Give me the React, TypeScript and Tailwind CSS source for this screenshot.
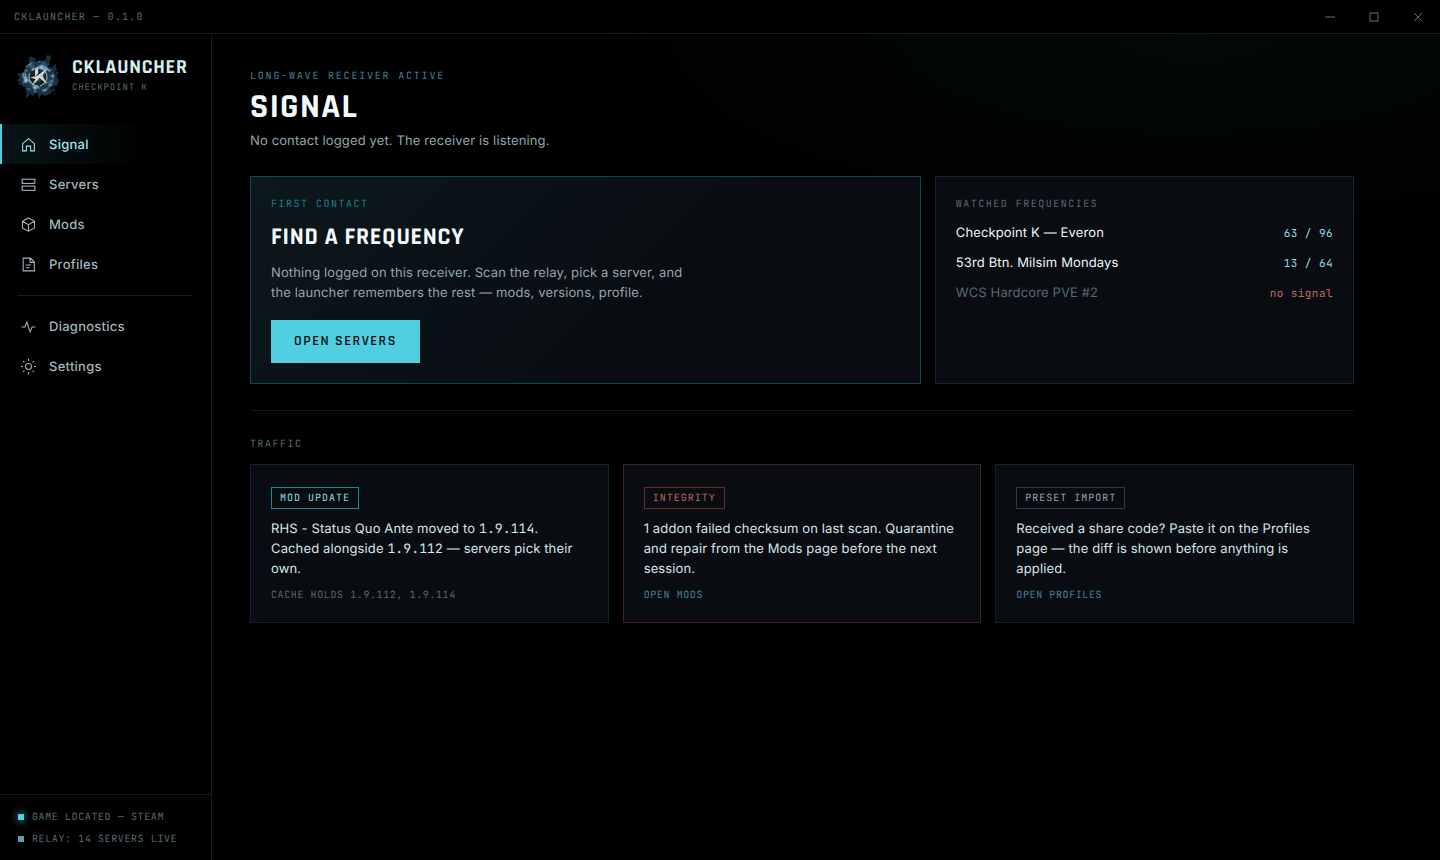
import { ReactNode } from "react";
import { clsx } from "clsx";

const MONO = "font-['JetBrains_Mono','DejaVu_Sans_Mono',monospace]";
const DISPLAY = "font-['Rajdhani','Liberation_Sans_Narrow','Roboto',sans-serif]";

const ICONS: Record<string, ReactNode> = {
  signal: <path d="M2.5 7.2 8 2.5l5.500 4.700V14h-3.500V9.500H6V14H2.500z" />,
  servers: (
    <>
      <rect x="2" y="3" width="12" height="4" />
      <rect x="2" y="9.500" width="12" height="4" />
    </>
  ),
  mods: <path d="M8 1.800 13.700 5v6.200L8 14.300l-5.700-3.100V5zM2.300 5 8 8.200 13.700 5M8 8.200v6.100" />,
  profiles: <path d="M3 2h6.800L13.500 5.700V14H3zM9.500 2v4h4M5.500 8.500h5M5.500 11h3.500" />,
  diagnostics: <path d="M1.500 8.500h3L6.500 4l3 9 2-4.500h3" />,
  settings: (
    <>
      <circle cx="8" cy="8" r="2.800" />
      <path d="M8 .8v2M8 13.200v2M.8 8h2M13.200 8h2M2.900 2.900l1.300 1.300M11.800 11.800l1.300 1.300M2.900 13.100l1.300-1.300M11.800 4.200l1.300-1.300" />
    </>
  ),
};

const PRIMARY = [
  { id: "signal", label: "Signal" },
  { id: "servers", label: "Servers" },
  { id: "mods", label: "Mods" },
  { id: "profiles", label: "Profiles" },
];

const SECONDARY = [
  { id: "diagnostics", label: "Diagnostics" },
  { id: "settings", label: "Settings" },
];

const WATCHED = [
  { name: "Checkpoint K — Everon", count: "63 / 96" },
  { name: "53rd Btn. Milsim Mondays", count: "13 / 64" },
  { name: "WCS Hardcore PVE #2", count: null },
];

function Logo() {
  return (
    <svg viewBox="0 0 44 44" className="h-11 w-11 flex-shrink-0" aria-hidden="true">
      <defs>
        <filter id="ragged" x="-20%" y="-20%" width="140%" height="140%">
          <feTurbulence type="fractalNoise" baseFrequency="0.16" numOctaves="3" seed="7" result="n" />
          <feDisplacementMap in="SourceGraphic" in2="n" scale="13" xChannelSelector="R" yChannelSelector="G" />
          <feGaussianBlur stdDeviation="0.4" />
        </filter>
        <filter id="mottle" x="0" y="0" width="100%" height="100%">
          <feTurbulence type="fractalNoise" baseFrequency="0.17" numOctaves="2" seed="12" />
          <feColorMatrix values="0 0 0 0 .34  0 0 0 0 .6  0 0 0 0 .76  2.800 0 0 0 -1.200" />
          <feComposite in2="SourceGraphic" operator="in" />
          <feGaussianBlur stdDeviation="0.5" />
        </filter>
        <radialGradient id="core">
          <stop offset="0" stopColor="#0b151d" />
          <stop offset=".5" stopColor="#1d3b50" />
          <stop offset="1" stopColor="#162c3d" />
        </radialGradient>
      </defs>
      <path
        d="M12 8l6-5 4 5 9-5 3 8 7 3-1 6 2 6-4 6-1 7-8 1-5 4-6-3-8 2-1-6-6-4 3-5-3-6 5-4z"
        fill="url(#core)"
        filter="url(#ragged)"
      />
      <circle cx="22" cy="23" r="16" fill="#000" filter="url(#mottle)" />
      <circle cx="22" cy="23" r="9" fill="#0a131a" fillOpacity=".7" stroke="#8fa2a8" strokeWidth="1.300" strokeDasharray="12 2 18 3" />
      <path d="M19 16l3-3 .3 6-3.300 4zM32 14 20.500 22l-6.500 1.500 5.500 1.500-4 7 5-4.500 3-3.500 7.500 6-4.500-8.500z" fill="#ced7d5" />
    </svg>
  );
}

function NavItem({ id, label, active }: { id: string; label: string; active?: boolean }) {
  return (
    <a
      href={`#${id}`}
      aria-current={active ? "page" : undefined}
      className={clsx(
        "flex h-10 items-center gap-3 border-l-2 pl-[18px] text-[13px] leading-5 font-medium tracking-[0.02em]",
        active
          ? "border-[#50cfe0] bg-linear-to-r from-[#50cfe0]/10 to-transparent to-70% text-[#9fe3ee]"
          : "border-transparent text-[#a3b4bc]"
      )}
    >
      <svg viewBox="0 0 16 16" className="h-[17px] w-[17px]" fill="none" stroke="currentColor" aria-hidden="true">
        {ICONS[id]}
      </svg>
      <span className="pt-0.5">{label}</span>
    </a>
  );
}

function Panel({ className, children }: { className?: string; children: ReactNode }) {
  return <section className={clsx("border px-5", className)}>{children}</section>;
}

function Label({ className, children }: { className?: string; children: ReactNode }) {
  return <h2 className={clsx(MONO, "text-[10px] leading-[14px] tracking-[0.15em] uppercase", className)}>{children}</h2>;
}

function Version({ children }: { children: ReactNode }) {
  return <span className={clsx(MONO, "leading-none")}>{children}</span>;
}

function TrafficCard({
  tag,
  tagClass,
  border = "border-[#17212a]",
  footer,
  children,
}: {
  tag: string;
  tagClass: string;
  border?: string;
  footer: ReactNode;
  children: ReactNode;
}) {
  return (
    <Panel className={clsx("bg-[#090d12] pt-[22px] pb-[19px]", border)}>
      <div className={clsx(MONO, "w-fit border px-2 text-[10px] leading-5 tracking-[0.1em]", tagClass)}>{tag}</div>
      <p className="mt-[10px] text-[13px] leading-5 tracking-[0.01em] text-[#d7e6ea]">{children}</p>
      <div className={clsx(MONO, "mt-2 text-[10px] leading-4 tracking-[0.06em] text-[#566974]")}>{footer}</div>
    </Panel>
  );
}

export default function App() {
  return (
    <div className="flex min-h-screen flex-col bg-black font-['Inter',sans-serif] [text-rendering:geometricPrecision]">
      <header className="flex h-[34px] items-center justify-between border-b border-[#151c20] pl-3.5">
        <span className={clsx(MONO, "text-[10px] tracking-[0.12em] text-[#566974]")}>CKLAUNCHER — 0.1.0</span>
        <div className="flex text-[#5d6f7a]">
          <button aria-label="Minimize" className="flex h-8 w-11 items-center justify-center">
            <svg viewBox="0 0 10 10" className="h-2.5 w-2.5" stroke="currentColor" fill="none">
              <path d="M0 5h10" />
            </svg>
          </button>
          <button aria-label="Maximize" className="flex h-8 w-11 items-center justify-center">
            <svg viewBox="0 0 10 10" className="h-2.5 w-2.5" stroke="currentColor" fill="none">
              <rect x="1" y="1" width="8" height="8" />
            </svg>
          </button>
          <button aria-label="Close" className="flex h-8 w-11 items-center justify-center">
            <svg viewBox="0 0 10 10" className="h-2.5 w-2.5" stroke="currentColor" fill="none">
              <path d="M1 1l8 8M9 1l-8 8" />
            </svg>
          </button>
        </div>
      </header>

      <div className="flex flex-1">
        <aside className="flex w-[212px] flex-shrink-0 flex-col border-r border-[#151c20]">
          <div className="flex gap-3 px-4 pt-5 pb-[26px]">
            <Logo />
            <div className="pt-[2px]">
              <div className={clsx(DISPLAY, "text-[20px] leading-[22px] font-bold tracking-[0.04em] text-[#d8edf3]")}>
                CKLAUNCHER
              </div>
              <div className={clsx(MONO, "mt-[2px] text-[9px] leading-[14px] tracking-[0.1em] text-[#566974]")}>
                CHECKPOINT K
              </div>
            </div>
          </div>

          <nav>
            {PRIMARY.map((n) => (
              <NavItem key={n.id} {...n} active={n.id === "signal"} />
            ))}
            <hr className="mx-[18px] mt-[11px] mb-[10px] border-[#151c20]" />
            {SECONDARY.map((n) => (
              <NavItem key={n.id} {...n} />
            ))}
          </nav>

          <div
            className={clsx(
              MONO,
              "mt-auto flex flex-col gap-1.5 border-t border-[#151c20] px-[18px] pt-3.5 pb-[13px] text-[10px] leading-4 tracking-[0.06em] text-[#566974]"
            )}
          >
            <div className="flex items-center gap-2">
              <span className="h-1.5 w-1.5 bg-[#50cfe0] shadow-[0_0_8px_#50cfe0]" />
              GAME LOCATED — STEAM
            </div>
            <div className="flex items-center gap-2">
              <span className="h-1.5 w-1.5 bg-[#5f9ebb]" />
              RELAY: 14 SERVERS LIVE
            </div>
          </div>
        </aside>

        <main className="min-w-0 flex-1 bg-[radial-gradient(ellipse_50%_25%_at_80%_0%,#030809,transparent)]">
          <div className="max-w-[1180px] px-[38px] pt-[34px] pb-10">
            <div className={clsx(MONO, "text-[10px] leading-4 tracking-[0.18em] text-[#44809c]")}>
              LONG-WAVE RECEIVER ACTIVE
            </div>
            <h1 className={clsx(DISPLAY, "mt-[5px] text-[34px] leading-9 font-bold tracking-[0.04em] text-[#f4fafc]")}>
              SIGNAL
            </h1>
            <p className="mt-1.5 text-[13px] leading-5 tracking-[0.01em] text-[#94a5ad]">
              No contact logged yet. The receiver is listening.
            </p>

            <div className="mt-[25px] grid grid-cols-[1.6fr_1fr] gap-3.5">
              <Panel className="border-[#0f4852] bg-linear-135 from-[#0c181d] to-[#090d12] to-60% py-5">
                <Label className="text-[#1d7f8c]">First contact</Label>
                <h3 className={clsx(DISPLAY, "mt-[13px] text-[24px] leading-7 font-bold tracking-[0.03em] text-[#f4fafc]")}>
                  FIND A FREQUENCY
                </h3>
                <p className="mt-[11px] max-w-[430px] text-[13px] leading-5 tracking-[0.01em] text-[#94a5ad]">
                  Nothing logged on this receiver. Scan the relay, pick a server, and the launcher remembers the rest —
                  mods, versions, profile.
                </p>
                <button
                  className={clsx(
                    DISPLAY,
                    "mt-[17px] block h-[43px] bg-[#50cfe0] px-[23px] text-[14px] font-semibold tracking-[0.11em] text-[#021014]"
                  )}
                >
                  OPEN SERVERS
                </button>
              </Panel>

              <Panel className="border-[#17212a] bg-[#090d12] py-5">
                <Label className="text-[#566974]">Watched frequencies</Label>
                <ul className="mt-3 flex flex-col gap-2.5 text-[13px] leading-5 tracking-[0.01em]">
                  {WATCHED.map((w) => (
                    <li key={w.name} className="flex items-baseline justify-between">
                      <span className={w.count ? "text-[#f0f6f8]" : "text-[#566974]"}>{w.name}</span>
                      <span
                        className={clsx(
                          MONO,
                          "text-[11px] leading-4 tracking-[0.04em]",
                          w.count ? "text-[#8fdbe6]" : "text-[#c46a62]"
                        )}
                      >
                        {w.count ?? "no signal"}
                      </span>
                    </li>
                  ))}
                </ul>
              </Panel>
            </div>

            <hr className="my-[26px] border-[#12181c]" />

            <Label className="text-[#566974]">Traffic</Label>
            <div className="mt-[13px] grid grid-cols-3 gap-3.5">
              <TrafficCard
                tag="MOD UPDATE"
                tagClass="border-[#1f8796] text-[#8fdbe6]"
                footer="CACHE HOLDS 1.9.112, 1.9.114"
              >
                RHS - Status Quo Ante moved to <Version>1.9.114</Version>. Cached alongside <Version>1.9.112</Version> —
                servers pick their own.
              </TrafficCard>
              <TrafficCard
                tag="INTEGRITY"
                tagClass="border-[#6a2823] text-[#b9655e]"
                border="border-[#3c2423]"
                footer={<a href="#mods" className="text-[#44809c]">OPEN MODS</a>}
              >
                1 addon failed checksum on last scan. Quarantine and repair from the Mods page before the next session.
              </TrafficCard>
              <TrafficCard
                tag="PRESET IMPORT"
                tagClass="border-[#2b3a44] text-[#94a5ad]"
                footer={<a href="#profiles" className="text-[#44809c]">OPEN PROFILES</a>}
              >
                Received a share code? Paste it on the Profiles page — the diff is shown before anything is applied.
              </TrafficCard>
            </div>
          </div>
        </main>
      </div>
    </div>
  );
}
